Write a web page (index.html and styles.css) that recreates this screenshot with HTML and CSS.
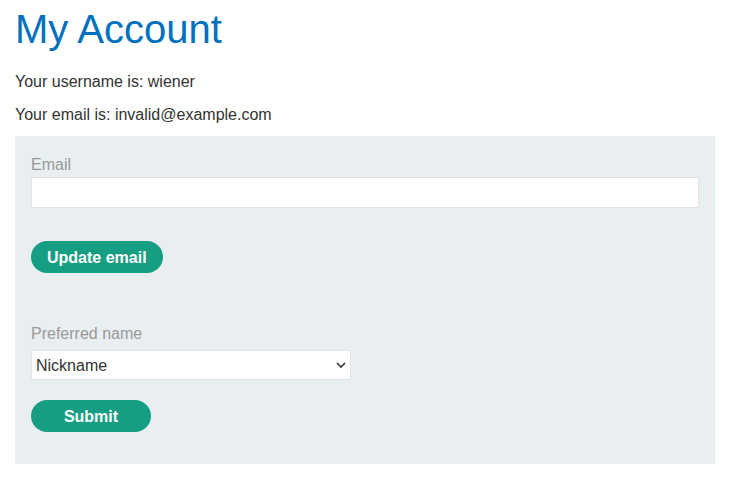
FILE: index.html
```html
<!DOCTYPE html>
<html lang="en">
<head>
<meta charset="utf-8">
<title>My Account</title>
<link rel="stylesheet" href="styles.css">
</head>
<body>
<div class="page">
  <h1 class="title">My Account</h1>
  <p class="info">Your username is: wiener</p>
  <p class="info info-second">Your email is: invalid@example.com</p>
  <div class="panel">
    <form class="form-email">
      <label class="label" for="email">Email</label>
      <input class="input" id="email" type="email" name="email">
      <button class="btn btn-update" type="button">Update email</button>
    </form>
    <form class="form-name">
      <label class="label label-name" for="name">Preferred name</label>
      <div class="select-wrap">
        <select class="select" id="name">
          <option>Nickname</option>
        </select>
        <svg class="chevron" width="10" height="6" viewBox="0 0 10 6" aria-hidden="true"><path d="M1 1 L5 5 L9 1" fill="none" stroke="#333" stroke-width="1.6"/></svg>
      </div>
      <button class="btn btn-submit" type="button">Submit</button>
    </form>
  </div>
</div>
</body>
</html>
```
FILE: styles.css
```css
html, body {
  margin: 0;
  padding: 0;
  background: #ffffff;
}
body {
  font-family: "Liberation Sans", Arial, sans-serif;
  color: #333332;
  font-size: 16px;
}
.page {
  padding: 0 28px 0 15px;
}
.title {
  margin: 6px 0 0 0;
  font-size: 40px;
  font-weight: normal;
  line-height: 46px;
  color: #0071bc;
}
.info {
  margin: 21px 0 0 0;
  line-height: 18px;
}
.info-second {
  margin-top: 15px;
}
.panel {
  margin-top: 12px;
  background: #e9eef1;
  padding: 20px 16px 32px 16px;
}
.form-email, .form-name {
  display: flex;
  flex-direction: column;
  align-items: flex-start;
}
.label {
  line-height: 18px;
  color: #999999;
}
.input {
  box-sizing: border-box;
  margin-top: 3px;
  width: 100%;
  height: 31px;
  border: 1px solid #e2e3e4;
  background: #ffffff;
  padding: 0 6px;
  font: 16px "Liberation Sans", Arial, sans-serif;
}
.btn {
  box-sizing: border-box;
  height: 32px;
  border: none;
  border-radius: 16px;
  background: #169e82;
  color: #ffffff;
  font: bold 16px "Liberation Sans", Arial, sans-serif;
  padding: 2px 16px 0 16px;
}
.btn-update {
  margin-top: 33px;
}
.form-name {
  margin-top: 52px;
}
.select-wrap {
  position: relative;
  margin-top: 7px;
  width: 320px;
}
.select {
  box-sizing: border-box;
  width: 320px;
  height: 30px;
  appearance: none;
  -webkit-appearance: none;
  border: 1px solid #e2e3e4;
  border-radius: 0;
  background: #ffffff;
  color: #333332;
  padding: 0 4px;
  font: 16px "Liberation Sans", Arial, sans-serif;
}
.chevron {
  position: absolute;
  right: 5px;
  top: 12px;
}
.btn-submit {
  margin-top: 20px;
  min-width: 120px;
}
```
